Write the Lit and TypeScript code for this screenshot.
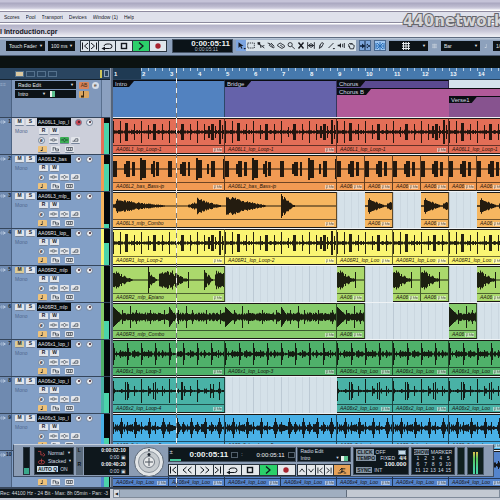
import { LitElement, html, svg, css } from "lit";
import { customElement } from "lit/decorators.js";
import { classMap } from "lit/directives/class-map.js";
import { styleMap } from "lit/directives/style-map.js";

const BAR = 28;

type Spike = [x: number, width: number, amp: number];

/** Repeatable noise in 0..1 for a sample index. */
const noise = (i: number, seed: number) => {
  const v = Math.sin(i * 12.9898 + seed * 78.233) * 43758.5453;
  return v - Math.floor(v);
};

const spikes = (x: number, list: Spike[]) =>
  list.reduce((a, [s, w, h]) => (x >= s && x < s + w ? Math.max(a, h) : a), 0);

const decay = (x: number, start: number, peak: number, length: number) =>
  x < start || x > start + length ? 0 : peak * Math.pow(1 - (x - start) / length, 1.3);

const LOOP: Spike[] = [
  [0, 1, 11], [7, 1, 11], [21, 1, 8], [28, 1, 11], [35, 1, 7], [49, 1, 8], [56, 1, 11], [63, 1, 5],
  [77, 1, 8], [84, 1, 11], [91, 1, 8], [12, 3, 9], [40, 3, 8], [68, 3, 8], [95, 2, 6], [98, 3, 8], [102, 1, 6], [106, 2, 12], [109, 1, 7],
];
const BASS: Spike[] = [
  [0, 4, 8], [11, 2, 5], [13, 4, 8], [19, 3, 7], [27, 2, 11], [29, 4, 9], [38, 2, 5], [40, 2, 8], [43, 3, 7],
  [55, 4, 8], [67, 2, 5], [69, 4, 7], [75, 2, 7], [83, 2, 11], [85, 4, 9], [94, 2, 5], [98, 4, 8], [110, 2, 10],
];
const PERC: Spike[] = [
  [0, 1, 10], [14, 1, 9], [12, 1, 9], [15, 1, 7], [28, 1, 12], [40, 1, 8], [42, 1, 9], [56, 1, 12], [21, 1, 5], [35, 1, 5], [49, 1, 5],
  [68, 2, 9], [71, 1, 5], [84, 1, 11], [77, 1, 5], [97, 1, 7], [100, 1, 7], [106, 1, 9],
];

const WAVES: Record<string, (x: number, len: number) => number> = {
  loop: (x) => Math.max(spikes(x % 112, LOOP), 0.8 + noise(x, 1) * 1.4),
  bass: (x) => Math.max(spikes(x % 112, BASS), 0.5),
  combo: (x, len) => {
    const n = 0.7 + noise(x, 2) * 0.5;
    if (len <= BAR) return Math.max(decay(x, 3, 7, 20) * n, x > 21 && x < 27 ? 3.5 * n : 0, 0.7);
    return Math.max(
      decay(x, 3, 6, 60) * n, x < 34 ? 2.5 * n : 0, decay(x, 84, 7, 28) * n, x > 74 && x < 84 ? 4 * n * ((x - 72) / 12) : 0,
      decay(x, 113, 10, 46) * n, x === 168 ? 12 : 0, decay(x, 169, 8, 14) * n * 1.2, 0.5);
  },
  epiano: (x, len) => {
    const n = 0.6 + noise(x, 3) * 0.6;
    if (len <= BAR) return Math.max(decay(x, 0, 10, 22) * n, x === 18 ? 8 : 0, 0.6);
    return Math.max(
      decay(x, 0, 9, 24) * n, x === 35 ? 13 : 0, decay(x, 36, 7, 10) * n, x > 45 && x < 60 ? 8 * n : 0,
      decay(x, 58, 8, 20) * n, x === 75 ? 8 : 0, x === 91 ? 10 : 0, decay(x, 91, 9, 10) * n, x > 101 ? 8 * n : 0, 0.6);
  },
  guitar: (x) => {
    const p = x % 112;
    return Math.max(2.4 + noise(x, 4) * 2.2, decay(p, 0, 10, 12), decay(p, 56, 10, 8), p === 17 || p === 73 ? 11 : 0, p % 14 === 9 ? 7 : 0);
  },
  beat: (x) => Math.max(x % 14 === 0 ? 11 : x % 14 === 1 ? 6 : x % 7 === 0 ? 4 : 0, 0.7 + noise(x, 5) * 2.2),
  perc: (x) => Math.max(spikes(x % 112, PERC), 0.8 + noise(x, 6) * 1.8 * (x % 7 < 3 ? 1 : 0.2)),
  noisy: (x) => Math.max(x % 14 === 8 ? 10 : x % 14 === 9 ? 6 : x % 7 === 0 ? 6 : 0, 1 + noise(x, 7) * 3),
};

interface Track {
  id: number;
  name: string;
  label: string;
  color: string;
  wave: string;
  level: number;
  clips: [bar: number, length: number][];
  muted?: boolean;
  selected?: boolean;
}

const TWO_BARS: [number, number][] = [[1, 4], [5, 4], [9, 2], [11, 2], [13, 2], [15, 2]];

const TRACKS: Track[] = [
  { id: 1, name: "AA06L1_lop_l", label: "AA06L1_lop_Loop-1", color: "#e36e57", wave: "loop", level: 86, selected: true, clips: [[1, 4], [5, 4], [9, 4], [13, 4]] },
  { id: 2, name: "AA06L2_bas", label: "AA06L2_bas_Bass-ip", color: "#f19a53", wave: "bass", level: 76, clips: [[1, 4], [5, 4], [9, 1], [10, 1], [11, 1], [12, 1], [13, 1], [14, 1], [15, 1]] },
  { id: 3, name: "AA06L3_mlp_", label: "AA06L3_mlp_Combo", color: "#f6b660", wave: "combo", level: 12, clips: [[1, 8], [10, 1], [12, 1], [14, 1]] },
  { id: 4, name: "AA06R1_lop_", label: "AA06R1_lop_Loop-2", color: "#faf573", wave: "loop", level: 60, clips: TWO_BARS },
  { id: 5, name: "AA06R2_mlp", label: "AA06R2_mlp_Epiano", color: "#abd96c", wave: "epiano", level: 0, muted: true, clips: [[1, 4], [9, 1], [11, 1], [12, 1], [14, 1]] },
  { id: 6, name: "AA06R3_mlp", label: "AA06R3_mlp_Combo", color: "#86cb6b", wave: "guitar", level: 50, clips: [[1, 8], [9, 1], [13, 1]] },
  { id: 7, name: "AA06x1_lop_l", label: "AA06x1_lop_Loop-3", color: "#4fb16a", wave: "beat", level: 0, muted: true, clips: TWO_BARS },
  { id: 8, name: "AA06x2_lop_l", label: "AA06x2_lop_Loop-4", color: "#49b2a6", wave: "perc", level: 56, clips: [[1, 4], [9, 2], [11, 2], [13, 2], [15, 2]] },
  { id: 9, name: "AA06x3_lop_l", label: "AA06x3_lop_Loop-5", color: "#48b0e6", wave: "noisy", level: 34, clips: TWO_BARS },
  { id: 10, name: "AA06x4_lop_l", label: "AA06x4_lop_Loop-6", color: "#5484cc", wave: "beat", level: 90, clips: [[1, 2], [3, 2], [5, 2], [7, 2], [9, 2], [11, 2], [13, 2], [15, 2]] },
];

/** Clip captions shorten with the clip so that they never run under its tag. */
const caption = (label: string, bars: number) =>
  bars === 1 ? label.slice(0, 4) : bars === 2 ? label.slice(0, 14) : label;

const L = (d: string) => svg`<path d=${d} fill="none" stroke="currentColor" />`;
const F = (d: string) => svg`<path d=${d} fill="currentColor" />`;

/* Glyphs on a 12 x 10 field. */
const ICONS: Record<string, unknown> = {
  toStart: svg`${L("M3.5 1.5v7")}${L("M9 2L5.5 5L9 8")}`,
  toEnd: svg`${L("M8.5 1.5v7")}${L("M3 2L6.5 5L3 8")}`,
  rewind: svg`${L("M5.5 2L2 5L5.5 8M10.5 2L7 5L10.5 8")}`,
  forward: svg`${L("M1.5 2L5 5L1.5 8M6.5 2L10 5L6.5 8")}`,
  cycle: svg`${L("M3 7.5h5.500q2.500 0 2.500-2.200t-2.500-2.300h-2.500q-2.500 0-3 2")}${F("M0.500 7.500L4 5.500v4z")}`,
  stop: svg`<rect x="3.500" y="2.500" width="5" height="5" fill="none" stroke="currentColor" stroke-width="1.400" />`,
  play: svg`<path d="M4 1.500L8 5L4 8.500" fill="none" stroke="currentColor" stroke-width="1.300" />`,
  record: svg`<circle cx="6" cy="5" r="2.700" fill="#a8232f" />`,
  arrow: svg`${F("M3 1v7l2-2l1.500 3l1.200-.6L6.300 5.600H9z")}${F("M9 8h3l-1.500 1.800z")}`,
  range: svg`<rect x="2" y="2" width="8" height="6" fill="none" stroke="currentColor" stroke-dasharray="1.500 1" />`,
  split: svg`${L("M2 2l8 6M5 4l1 4M7 6l3-1")}${F("M2 1h3v3H2z")}`,
  glue: svg`${L("M2 2l3 1l5 5M5 3l-1 2l5 3M6 2l4 4")}`,
  erase: svg`${L("M2 4l3-2l5 3v2l-3 1.500l-5-3zM5 4.500l3 2")}`,
  zoom: svg`<circle cx="5" cy="4" r="2.500" fill="none" stroke="currentColor" />${L("M7 6l3.500 3")}`,
  mute: svg`<path d="M3 1.500l6 7M9 1.500l-6 7" fill="none" stroke="currentColor" stroke-width="1.700" />`,
  warp: svg`${L("M2 1v8M10 1v8M2.500 5h7M5 3L3 5l2 2M7 3l2 2l-2 2M6 2v6")}`,
  draw: svg`${L("M4 8.500L4.500 5L7 1.500L9 2.500L7 6.500zM4.500 5l2.500 1.500")}`,
  line: svg`${L("M3 8l6-6")}${F("M8 8h3l-1.500 1.800z")}`,
  speaker: svg`${F("M2 4h2l2-2v6l-2-2h-2z")}${L("M8 3v4M10 2v6")}`,
  hand: svg`${L("M3 4l2-2l1 2l1-2l1 2l2 1l-1 4h-4zM3 6l2 1")}`,
  scroll: svg`${F("M5.500 0h1v10h-1zM1 4.300h10v1.400h-10zM3 2.500L6 5L3 7.500zM9 2.500L6 5l3 2.500z")}`,
  snap: svg`${L("M6 1v8M2 5h8M3 2l6 6M9 2L3 8M2 2v6M10 2v6")}`,
  grid: svg`${L("M2 2.500h8M2 5h8M2 7.500h8M3.500 1v8M6 1v8M8.500 1v8")}`,
  up: svg`${L("M3 7L6 3L9 7")}`,
  down: svg`${L("M3 3L6 7L9 3")}`,
  chain: svg`${L("M1 8h4v-2h4M5 3h5M3 5l3-3v6M8 8h3")}`,
  wave: svg`${L("M0 5h3M9 5h3")}<ellipse cx="6" cy="5" rx="3" ry="1.800" fill="none" stroke="currentColor" />`,
  eq: svg`${L("M0 5h3M9 5h3M3 5l3-3l3 3l-3 3z")}`,
  send: svg`${L("M1 7h3l2-4h4v4h-6")}`,
  note: svg`${F("M3 6.500h2v-5h1v7H3z")}`,
  lanes: svg`${L("M2 2v6M2 3h4M6 3v4M6 5h5v3h-5")}`,
  boxes: svg`<rect x="1.500" y="2.500" width="9" height="5" fill="none" stroke="currentColor" />${L("M4.500 3v4M7.500 3v4")}`,
  plug: svg`${L("M0 5h3M3 2q3 3 0 6M6 1q4 4 0 8M9 3v4M7 5h5")}`,
  curve: svg`${L("M1 2h4v5h3M8 4l3 3l-3 2")}`,
  loops: svg`<ellipse cx="6" cy="6" rx="4.500" ry="2.500" fill="none" stroke="currentColor" />${L("M6 1v6")}`,
};

const icon = (name: string) =>
  html`<svg class="icon" viewBox="0 0 12 10" aria-hidden="true">${ICONS[name]}</svg>`;

const shared = css`
  * { box-sizing: border-box; }
  button, select, input {
    font: inherit; color: inherit; line-height: 1; margin: 0; padding: 0; border: 0;
    border-radius: 0; appearance: none; background: none; min-width: 0; outline-offset: -1px;
  }
  button { display: flex; align-items: center; justify-content: center; overflow: hidden; }
  .icon { display: block; width: 12px; height: 10px; flex: none; }
`;

@customElement("track-header")
class TrackHeader extends LitElement {
  static properties = { track: { attribute: false } };
  declare track: Track;

  static styles = [shared, css`
    :host { display: block; }
    .row {
      display: grid; grid-template-columns: 12px 1fr 3px 6px; height: 37px;
      background: #829fc6; border-top: 1px solid #35465c; color: #16202c;
    }
    .selected { background: #cccfda; }
    .num {
      display: flex; justify-content: space-between; background: #6f8ab0; padding-top: 1px;
      border-right: 1px solid #4c6382; font-size: 5px; font-weight: bold; color: #0f1c2e;
    }
    .num .icon { width: 6px; height: 6px; color: #d8e4f4; }
    .body { display: grid; grid-template-rows: 8px 10px 9px 9px; padding-left: 3px; align-items: center; }
    .line { display: flex; align-items: center; gap: 2px; }
    .name { width: 34px; height: 8px; background: #060a0e; color: #e6ecef; font-size: 5px; padding-left: 1px; }
    .btn {
      width: 9px; height: 7px; background: #e2e5ea; border-bottom: 1px solid #76849a; border-radius: 1px;
      font-size: 5px; font-weight: bold;
    }
    .btn .icon { width: 9px; height: 6px; }
    .muted { background: #dccb98; }
    .on { background: #eec27a; }
    .green { background: #3cae54; }
    .dot {
      width: 7px; height: 7px; border-radius: 4px; background: #e6e9ee; border: 1px solid #73849b;
      font-size: 5px; font-weight: bold; margin-right: 2px;
    }
    .dot::before { content: ""; width: 2px; height: 2px; border-radius: 1px; background: #3c1720; flex: none; }
    .dot.edit::before { display: none; }
    .dot.armed { background: #c94450; }
    .mono { width: 20px; font-size: 5px; color: #50688d; }
    .indent { padding-left: 23px; }
    .gapped { margin-left: 3px; }
    .stripe { background: var(--tint); }
    .meter { background: #05080b; display: flex; flex-direction: column; justify-content: flex-end; padding: 0 1px 0 0; }
    .fill { background: #4bd3aa; }
  `];

  render() {
    const t = this.track;
    return html`
      <div class=${classMap({ row: true, selected: !!t.selected })}>
        <div class="num">${icon("plug")}<span>${t.id}</span></div>
        <div class="body">
          <div class="line">
            <button class=${classMap({ btn: true, muted: !!t.muted })} aria-label="Mute">M</button>
            <button class="btn" aria-label="Solo">S</button>
            <input class="name" aria-label="Track name" .value=${t.name} />
            <span></span>
            <button class=${classMap({ dot: true, armed: !!t.selected })} aria-label="Record enable"></button>
            <button class="dot" aria-label="Monitor"></button>
          </div>
          <div class="line"><span class="mono">Mono</span>
            <span></span>
            <button class="btn" aria-label="Read automation">R</button>
            <button class="btn" aria-label="Write automation">W</button>
          </div>
          <div class="line indent">
            <button class="dot edit" aria-label="Edit channel">e</button>
            <button class="btn" aria-label="Inserts">${icon("wave")}</button>
            <button class=${classMap({ btn: true, green: !!t.selected })} aria-label="Equalizer">${icon("eq")}</button>
            <button class="btn" aria-label="Sends">${icon("send")}</button>
          </div>
          <div class="line indent">
            <button class="btn on" aria-label="Musical time base">${icon("note")}</button>
            <span></span>
            <button class="btn" aria-label="Lanes">${icon("lanes")}</button>
            <button class="btn gapped" aria-label="Freeze">${icon("boxes")}</button>
          </div>
        </div>
        <div class="stripe" style=${styleMap({ "--tint": t.color })}></div>
        <div class="meter"><div class="fill" style=${styleMap({ height: `${t.level}%` })}></div></div>
      </div>`;
  }
}

@customElement("track-lane")
class TrackLane extends LitElement {
  static properties = { track: { attribute: false } };
  declare track: Track;

  static styles = [shared, css`
    :host { display: block; }
    .lane {
      display: grid; grid-template-columns: repeat(16, 28px); height: 37px; border-top: 1px solid #eef2f5;
      background:
        repeating-linear-gradient(90deg, #bcc9d4 0 1px, transparent 1px 28px),
        repeating-linear-gradient(90deg, #cbd7e0 0 1px, #d5e1e9 1px 7px);
    }
    .clip {
      display: flex; flex-direction: column; grid-row: 1; height: 36px; min-width: 0; overflow: hidden;
      background: var(--tint); border: 1px solid #1d1a16; border-left-width: 0; border-right-color: rgb(0 0 0 / 60%);
    }
    .wave { display: block; height: 26px; width: 100%; }
    .foot {
      display: flex; justify-content: space-between; align-items: center; height: 8px; flex: none;
      border-top: 1px solid rgb(0 0 0 / 55%); padding-left: 3px;
    }
    .label { font-size: 5px; font-style: italic; white-space: nowrap; line-height: 7px; color: #1a120c; min-width: 0; }
    .tag { background: rgb(255 255 255 / 50%); height: 4px; width: 9px; flex: none; margin-right: 2px; }
    .tag svg { display: block; }
  `];

  private wave(len: number) {
    const shape = WAVES[this.track.wave];
    let d = "";
    for (let x = 0; x < len; x++) {
      const a = shape(x, len);
      d += `M${x} ${(13 - a).toFixed(1)}h1V${(13 + a).toFixed(1)}h-1z`;
    }
    return svg`<path d=${d} fill="#0d0b08" fill-opacity="0.900" />`;
  }

  render() {
    const t = this.track;
    return html`
      <div class="lane" style=${styleMap({ "--tint": t.color })}>
        ${t.clips.map(([bar, n]) => html`
          <div class="clip" style=${styleMap({ gridColumn: `${bar} / span ${n}` })}>
            <svg class="wave" viewBox="0 0 ${n * BAR} 26" preserveAspectRatio="xMinYMid slice" aria-hidden="true">${this.wave(n * BAR)}</svg>
            <div class="foot">
              <span class="label">${caption(t.label, n)}</span>
              <span class="tag"><svg width="9" height="4" viewBox="0 0 9 4" aria-hidden="true"><path d="M1 3h1v-3M4 1h1v2M6 1h1v2M8 1v2" fill="none" stroke="#4a4a44" stroke-width="0.600" /></svg></span>
            </div>
          </div>`)}
      </div>`;
  }
}

@customElement("transport-panel")
class TransportPanel extends LitElement {
  static styles = [shared, css`
    :host { display: block; }
    .panel {
      display: grid; height: 33px; padding: 2px 0 1px; font-size: 5px; color: #d4dde2;
      grid-template-columns: 18px 40px 54px 34px 128px 54px 56px 44px 8px 17px; justify-content: space-between;
      background: #8b9cb4; border: 1px solid #3f4f66; border-top-color: #c5d0df; padding-right: 9px;
    }
    .box { background: #0e171c; height: 28px; padding: 1px 2px; border: 1px solid #3d4a59; display: flex; flex-direction: column; justify-content: space-between; min-width: 0; overflow: hidden; }
    .cpu { display: flex; justify-content: flex-end; padding-right: 2px; }
    .fader { width: 7px; height: 28px; background: linear-gradient(#0e171c 75%, #3aa98b 75%); border: 1px solid #26333f; }
    .pair { display: flex; align-items: center; justify-content: space-between; gap: 2px; height: 8px; white-space: nowrap; }
    .pick { flex: 1; text-align: left; }
    .arrow { font-size: 4px; }
    .red { color: #d8474c; }
    .red .icon { width: 9px; height: 7px; }
    .key { background: #8796a5; color: #10181e; padding: 0 1px; font-size: 5px; font-weight: bold; height: 6px; }
    .lit { background: #c6dbe8; }
    .blink { background: #c6dbe8; width: 8px; height: 5px; border: 1px solid #6f8496; }
    .locs { display: grid; grid-template-columns: 7px 1fr; gap: 0 1px; height: 28px; padding-right: 1px; }
    .loc { background: #0e171c; text-align: right; padding-right: 3px; line-height: 7px; }
    .strong { font-weight: bold; color: #f2f6f7; }
    .side { background: #5b6b7c; color: #0c1319; text-align: center; line-height: 7px; font-weight: bold; }
    .wheel { display: flex; align-items: center; justify-content: center; }
    .wheel svg { display: block; width: 30px; height: 28px; overflow: visible; }
    .main, .arr { display: flex; flex-direction: column; gap: 2px; height: 29px; min-width: 0; }
    .clock {
      display: flex; align-items: center; height: 15px; background: #0e171c; border: 1px solid #3d4a59;
      padding-left: 1px; gap: 3px;
    }
    .jog { display: flex; flex-direction: column; justify-content: space-between; height: 12px; width: 11px; font-size: 6px; }
    .jog::after { content: ""; height: 2px; background: #45c79b; }
    .big { font-size: 8px; font-weight: bold; color: #eef3f4; margin-left: 6px; }
    .mid { font-size: 6px; margin-left: auto; color: #eef3f4; }
    .unit { width: 7px; height: 6px; border: 1px solid #52606c; flex: none; }
    .keys { display: flex; gap: 1px; height: 12px; background: #27313b; padding: 1px; color: #10161c; }
    .keys button { flex: 2; background: #e4e7ea; }
    .keys .thin { flex: 1; }
    .keys .go { background: #2bd06a; }
    .keys .warm { background: #e5a158; }
    .arr button { flex: 1; }
    .arr button .icon { width: 10px; height: 9px; }
    .arr .keys .warm { flex: 2; }
    .arr .box { height: 15px; padding: 0 2px; }
    .chip { width: 7px; height: 5px; background: linear-gradient(90deg, #e9f0ea 40%, #5cc18e 40%); }
    .nums { display: grid; grid-template-columns: repeat(5, 1fr); flex: 1; text-align: center; align-items: center; }
    .meter { background: #10201f; height: 28px; border: 1px solid #4a5a69; display: flex; gap: 1px; align-items: flex-end; justify-content: center; }
    .bar { width: 2px; height: 84%; background: linear-gradient(#e3c14d, #58c55b 30%, #4ad39f 75%); }
    .tempo { font-size: 6px; text-align: right; color: #eef3f4; font-weight: bold; line-height: 6px; }
    .tight .pair { height: 6px; }
  `];

  render() {
    return html`
      <section class="panel" aria-label="Transport">
        <div class="cpu"><div class="fader"></div></div>
        <div class="box">
          <button class="pair"><span class="red">${icon("curve")}</span><span class="pick">Normal</span><span class="arrow">▼</span></button>
          <button class="pair"><span class="red">${icon("loops")}</span><span class="pick">Stacked</span><span class="arrow">▼</span></button>
          <div class="pair"><button class="key lit">AUTO Q</button><span class="pick">ON</span></div>
        </div>
        <div class="locs">
          <span class="side">L</span><span class="loc strong">0:00:02:10</span>
          <span class="side"></span><span class="loc">0:00 ▣</span>
          <span class="side">R</span><span class="loc strong">0:00:40:20</span>
          <span class="side"></span><span class="loc">0:00 ▣</span>
        </div>
        <div class="wheel">
          <svg viewBox="0 0 30 28" aria-hidden="true">
            <circle cx="15" cy="14" r="14.500" fill="#e2e5e7" stroke="#5b6776" />
            <circle cx="15" cy="14" r="10.500" fill="#c6cbcf" stroke="#8b939c" />
            <circle cx="15" cy="14" r="5.500" fill="#e7e9ea" stroke="#737b85" />
            <path d="M15 10v8M11 14h8" stroke="#4b535d" fill="none" />
            <circle cx="15" cy="6.500" r="1.500" fill="#18202a" /><circle cx="15" cy="2" r="0.900" fill="#18202a" />
          </svg>
        </div>
        <div class="main">
          <div class="clock">
            <span class="jog">±</span><span class="big">0:00:05:11</span><span class="unit"></span><span>:</span>
            <span class="mid">0:00:05:11</span><span class="unit"></span>
          </div>
          <div class="keys">
            <button class="thin" aria-label="Go to start">${icon("toStart")}</button>
            <button aria-label="Rewind">${icon("rewind")}</button>
            <button aria-label="Forward">${icon("forward")}</button>
            <button class="thin" aria-label="Go to end">${icon("toEnd")}</button>
            <button aria-label="Cycle">${icon("cycle")}</button>
            <button aria-label="Stop">${icon("stop")}</button>
            <button class="go" aria-label="Play">${icon("play")}</button>
            <button aria-label="Record">${icon("record")}</button>
          </div>
        </div>
        <div class="arr">
          <div class="box tight">
            <div class="pair"><span>Radio Edit</span></div>
            <div class="pair"><span class="pick">Intro</span><span class="arrow">▼</span><span class="chip"></span></div>
          </div>
          <div class="keys">
            <button aria-label="Previous chain step">${icon("up")}</button>
            <button aria-label="Next chain step">${icon("down")}</button>
            <button aria-label="First repeat">${icon("toStart")}</button>
            <button aria-label="Last repeat">${icon("toEnd")}</button>
            <button class="warm" aria-label="Activate arranger">${icon("chain")}</button>
          </div>
        </div>
        <div class="box tight">
          <div class="pair"><button class="key">CLICK</button><span class="pick">OFF</span><span class="blink"></span></div>
          <div class="pair"><button class="key">TEMPO</button><span>FIXED</span><span class="strong">4/4</span></div>
          <div class="tempo">100.000</div>
          <div class="pair"><button class="key">SYNC</button><span class="pick">INT</span></div>
        </div>
        <div class="box tight">
          <div class="pair"><button class="key">SHOW</button><span>MARKER</span></div>
          <div class="nums">${Array.from({ length: 15 }, (_, i) => html`<span>${i + 1}</span>`)}</div>
        </div>
        <div class="meter"></div>
        <div class="meter"><div class="bar"></div><div class="bar"></div></div>
      </section>`;
  }
}

const TOOLS = ["arrow", "range", "split", "glue", "erase", "zoom", "mute", "warp", "draw", "line", "speaker", "hand"];

@customElement("app-root")
class AppRoot extends LitElement {
  static styles = [shared, css`
    :host {
      display: block; min-height: 100vh; overflow: hidden; background: #c7ccd6;
      font-family: "Liberation Sans", Arial, sans-serif; line-height: 1; color: #15181f;
    }
    .top {
      position: relative; height: 12px; border-bottom: 1px solid #8f8ba0;
      background: linear-gradient(#c5c3d8 0 2px, #a9a7c0 3px, #c0bed2 7px, #dcdbe8 9px, #fff 10px);
    }
    .menu { display: flex; gap: 6px; height: 11px; background: #dfe1eb; padding-left: 4px; align-items: center; font-size: 5px; border-bottom: 1px solid #8b8a9d; }
    .menu u { text-underline-offset: 1px; }
    .title {
      display: flex; align-items: center; height: 14px; padding-top: 2px; font-size: 7px; font-weight: bold;
      margin: 0; background: linear-gradient(#fff 0 1px, #b3b2c8 2px, #c9c8d8 8px, #ececf3 13px);
    }
    .brand {
      position: absolute; z-index: 2; left: 403px; top: 13px; font: bold 15px/17px "DejaVu Sans", Verdana, sans-serif; color: #d5d5d8;
      -webkit-text-stroke: 2px #65656b; paint-order: stroke fill; white-space: nowrap;
    }
    .bar {
      display: flex; align-items: center; height: 19px; gap: 3px; padding: 0 0 2px 6px; overflow: hidden;
      background: linear-gradient(#b8c5d6 0 1px, #8da1bc 2px 100%); border-top: 1px solid #5d6b80; border-bottom: 1px solid #4b5b72; font-size: 5px;
    }
    .bar > * { flex: none; }
    .drop { width: 100%; height: 10px; color: #e4e9ec; padding-left: 3px; font-size: 5px; line-height: 10px; }
    .wrap { display: flex; align-items: center; background: #0c1216; color: #e4e9ec; padding-right: 2px; }
    .wrap::after { content: "▼"; font-size: 4px; }
    .wrap .drop { flex: 1; min-width: 0; }
    .w39 { width: 39px; } .w27 { width: 27px; }
    .pad { height: 10px; }
    .glyph { flex: 1; display: flex; justify-content: center; }
    .keys { display: flex; gap: 1px; background: #29343f; padding: 1px; height: 12px; width: 87px; margin: 0 2px; }
    .keys button { flex: 2; background: #dfe6ec; }
    .keys .thin { flex: 1; }
    .keys .go { background: #2bd06a; }
    .time {
      width: 61px; height: 14px; background: #0b1318; border: 1px solid #455365; color: #eef2f4; padding-right: 2px;
      display: flex; flex-direction: column; align-items: flex-end; justify-content: center;
    }
    .time b { font-size: 8px; line-height: 7px; }
    .time small { font-size: 5px; line-height: 5px; color: #b4bfc7; margin-right: 12px; }
    .tools { display: flex; height: 11px; background: #dbe4ea; }
    .tools button { width: 10px; }
    .tools .active { background: #7da5e0; }
    .tools .icon { width: 10px; height: 9px; }
    .sq { width: 12px; height: 11px; background: #7ea6dc; border: 1px solid #49688f; color: #10223c; }
    .pale { background: #9cc4ee; color: #2a6fb8; }
    .faint { color: #c5cfdb; }
    .faint .icon { width: 7px; height: 8px; }
    .gap { height: 12px; background: #0b1211; }
    .work { position: relative; display: grid; grid-template-columns: 110px 3px 1fr; overflow: hidden; border-bottom: 2px solid #39475a; }
    .split { background: #55647a; border-left: 1px solid #8c9bb0; }
    .strip { display: flex; align-items: center; gap: 2px; height: 12px; padding-left: 15px; background: #2a4560; border-bottom: 1px solid #16232f; }
    .strip button { width: 9px; height: 6px; border: 1px solid #55728d; color: #55728d; }
    .strip .sel { background: #dcc9a0; }
    .strip i { width: 2px; height: 8px; background: #cfc65b; margin-left: auto; }
    .strip .cell { width: 5px; height: 7px; border: 1px solid #8ca3ba; margin-right: 1px; }
    .arranger { display: grid; grid-template-columns: 12px 1fr 9px; height: 37px; background: #8098bb; }
    .arranger .left { background: #657fa4; border-right: 1px solid #4c6382; font-size: 5px; color: #9db2cc; padding-top: 2px; }
    .arranger .right { background: #8ba0c0; border-left: 1px solid #596f8e; }
    .fields { display: grid; grid-template-columns: 61px 10px 8px; gap: 1px 3px; padding: 1px 0 0 3px; align-content: start; align-items: center; }
    .fields .wrap { height: 8px; }
    .fields .drop { height: 8px; line-height: 8px; }
    .fields button { height: 7px; background: #dba65f; color: #3c2a12; border-radius: 1px; font-size: 5px; }
    .fields .orange { background: #d8845c; }
    .fields .round { background: #d6dde6; border-radius: 4px; width: 7px; }
    .short { display: flex; background: #0c1216; align-items: center; height: 8px; }
    .short .wrap { flex: 1; }
    .chip { width: 28px; height: 6px; background: linear-gradient(90deg, #0c1216 2px, #e9f0ea 2px 4px, #5cc18e 4px 7px, #0c1216 7px); }
    .time-area { position: relative; overflow: hidden; min-width: 0; }
    .ruler {
      display: grid; grid-template-columns: repeat(16, 28px); height: 12px; border-bottom: 1px solid #28415b; align-items: end;
      background: repeating-linear-gradient(90deg, #b7cde2 0 1px, transparent 1px 7px) 0 0 / 100% 3px no-repeat, #4679ad;
      font-size: 6px; font-weight: bold; color: #f2f7fb;
    }
    .ruler span { padding: 2px 0 0 1px; height: 11px; line-height: 9px; }
    .ruler .first { background: #1f3a53; }
    .marks { display: grid; grid-template-columns: repeat(16, 28px); grid-template-rows: 8px 8px 1fr; height: 37px; background: #d5e2ee; font-size: 6px; }
    .mark { background: var(--tint); border-top: 1px solid #0a0c12; border-right: 1px solid rgb(0 0 0 / 45%); display: flex; align-items: flex-start; min-width: 0; }
    .mark span { background: #0b0d12; color: #d4d9e2; padding: 0 7px 0 2px; height: 6px; line-height: 6px; clip-path: polygon(0 0, 100% 0, calc(100% - 5px) 100%, 0 100%); }
    .cursor { position: absolute; top: 0; bottom: 0; left: 63px; width: 1px; background: repeating-linear-gradient(#f0f0ee 0 5px, #77777a 5px 10px); }
    .float { position: absolute; left: 13px; right: 6px; bottom: 10px; max-width: 481px; }
    .foot { display: grid; grid-template-columns: 110px 1fr; gap: 3px; height: 9px; }
    .status { background: #10181d; color: #d4dade; font-size: 5px; line-height: 8px; white-space: nowrap; overflow: hidden; }
    .scroll { display: flex; background: #c3c9d2; border: 1px solid #7f8a99; }
    .scroll button { width: 6px; background: #d9dde3; font-size: 4px; border-right: 1px solid #7f8a99; }
    .thumb { width: 59%; background: #a0aec0; border-right: 1px solid #5f6b7b; }
  `];

  private select(label: string, value: string, width = "") {
    return html`<span class="wrap ${width}"><select class="drop" aria-label=${label}><option>${value}</option></select></span>`;
  }

  render() {
    const menus = [["S", "cores"], ["P", "ool"], ["T", "ransport"], ["D", "evices"], ["W", "indow (1)"], ["H", "elp"]];
    const marks = [
      { name: "Intro", color: "#5282c0", area: "1 / 1 / 4 / 5" },
      { name: "Bridge", color: "#6562aa", area: "1 / 5 / 4 / 9" },
      { name: "Chorus", color: "#5a4a90", area: "1 / 9 / 2 / 13" },
      { name: "Chorus B", color: "#b15a99", area: "2 / 9 / 4 / 17" },
      { name: "Verse1", color: "#87538f", area: "3 / 13 / 4 / 17" },
    ];
    return html`
      <div class="top"><div class="brand">440network</div></div>
      <nav class="menu">${menus.map(([k, rest]) => html`<button><span><u>${k}</u>${rest}</span></button>`)}</nav>
      <h1 class="title">l Introduction.cpr</h1>
      <div class="bar" role="toolbar">
        ${this.select("Automation mode", "Touch Fader", "w39")}
        ${this.select("Return time", "100 ms", "w27")}
        <div class="keys">
          <button class="thin" aria-label="Go to start">${icon("toStart")}</button>
          <button class="thin" aria-label="Go to end">${icon("toEnd")}</button>
          <button aria-label="Cycle">${icon("cycle")}</button>
          <button aria-label="Stop">${icon("stop")}</button>
          <button class="go" aria-label="Play">${icon("play")}</button>
          <button aria-label="Record">${icon("record")}</button>
        </div>
        <div class="time"><b>0:00:05:11</b><small>0:00:05:11</small></div>
        <div class="tools">
          ${TOOLS.map((t, i) => html`<button class=${i === 0 ? "active" : ""} aria-label=${t}>${icon(t)}</button>`)}
        </div>
        <button class="sq" aria-label="Autoscroll">${icon("scroll")}</button>
        <button class="sq pale" aria-label="Snap">${icon("snap")}</button>
        <button class="wrap w39 pad" aria-label="Snap mode"><span class="glyph">${icon("grid")}</span></button>
        <span class="faint">${icon("grid")}</span>
        ${this.select("Grid type", "Bar", "w39")}
        <span class="faint">${icon("note")}</span>
        ${this.select("Quantize", "1/16", "w39")}
      </div>
      <div class="gap"></div>
      <main class="work">
        <div>
          <div class="strip">
            <button class="sel" aria-label="View 1"></button><button aria-label="View 2"></button>
            <button aria-label="View 3"></button><button aria-label="View 4"></button>
            <i></i><span class="cell"></span>
          </div>
          <div class="arranger">
            <div class="left">≡≡</div>
            <div class="fields">
              ${this.select("Arranger chain", "Radio Edit")}
              <button class="orange" aria-label="Arranger mode">AB</button><button class="round" aria-label="Edit arranger">e</button>
              <div class="short">${this.select("Chain step", "Intro")}<span class="chip"></span></div>
              <button aria-label="Time base">${icon("note")}</button>
            </div>
            <div class="right"></div>
          </div>
          ${TRACKS.map((t) => html`<track-header .track=${t}></track-header>`)}
        </div>
        <div class="split"></div>
        <div class="time-area">
          <div class="ruler">${Array.from({ length: 16 }, (_, i) => html`<span class=${i ? "" : "first"}>${i + 1}</span>`)}</div>
          <div class="marks">
            ${marks.map((m) => html`<div class="mark" style=${styleMap({ gridArea: m.area, "--tint": m.color })}><span>${m.name}</span></div>`)}
          </div>
          ${TRACKS.map((t) => html`<track-lane .track=${t}></track-lane>`)}
          <div class="cursor"></div>
        </div>
        <div class="float"><transport-panel></transport-panel></div>
      </main>
      <div class="foot">
        <div class="status">Rec: 44100 Hz - 24 Bit - Max: 8h 05min - Pan: -3</div>
        <div class="scroll"><button aria-label="Scroll left">◀</button><div class="thumb"></div></div>
      </div>`;
  }
}
